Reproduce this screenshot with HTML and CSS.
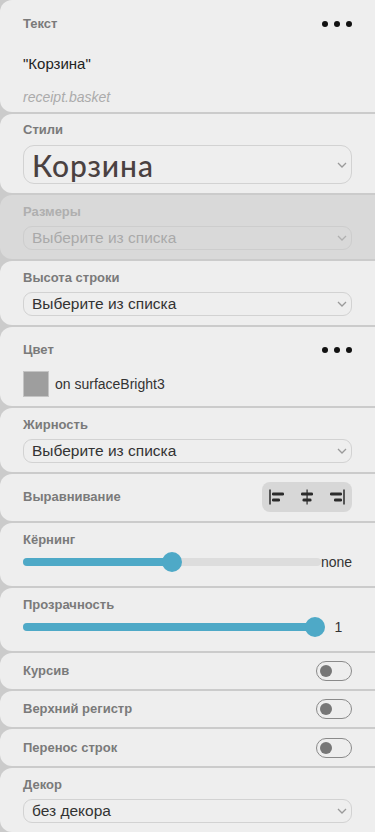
FILE: index.html
```html
<!DOCTYPE html>
<html lang="ru">
<head>
<meta charset="utf-8">
<title>Текст</title>
<link rel="stylesheet" href="styles.css">
</head>
<body>
<div class="panel">
  <section class="sec sec-text">
    <div class="head"><span class="label">Текст</span><span class="dots"><i></i><i></i><i></i></span></div>
    <div class="value">"Корзина"</div>
    <div class="key">receipt.basket</div>
  </section>

  <section class="sec sec-style">
    <span class="label">Стили</span>
    <div class="select select-big"><span class="style-name">Корзина</span><svg class="chev" viewBox="0 0 10 6" width="10" height="6"><path d="M1 1 L5 5 L9 1" fill="none" stroke="#9a9a9a" stroke-width="1.3"/></svg></div>
  </section>

  <section class="sec sec-field disabled">
    <span class="label">Размеры</span>
    <div class="select"><span>Выберите из списка</span><svg class="chev" viewBox="0 0 10 6" width="10" height="6"><path d="M1 1 L5 5 L9 1" fill="none" stroke="#b0b0b0" stroke-width="1.3"/></svg></div>
  </section>

  <section class="sec sec-field">
    <span class="label">Высота строки</span>
    <div class="select"><span>Выберите из списка</span><svg class="chev" viewBox="0 0 10 6" width="10" height="6"><path d="M1 1 L5 5 L9 1" fill="none" stroke="#9a9a9a" stroke-width="1.3"/></svg></div>
  </section>

  <section class="sec sec-color">
    <div class="head"><span class="label">Цвет</span><span class="dots"><i></i><i></i><i></i></span></div>
    <div class="color-row"><span class="swatch"></span><span class="color-name">on surfaceBright3</span></div>
  </section>

  <section class="sec sec-field">
    <span class="label">Жирность</span>
    <div class="select"><span>Выберите из списка</span><svg class="chev" viewBox="0 0 10 6" width="10" height="6"><path d="M1 1 L5 5 L9 1" fill="none" stroke="#9a9a9a" stroke-width="1.3"/></svg></div>
  </section>

  <section class="sec sec-align">
    <span class="label">Выравнивание</span>
    <div class="align-group">
      <svg viewBox="0 0 16 16" width="16" height="16"><rect x="0" y="0.5" width="2" height="15" fill="#555"/><rect x="3" y="3.5" width="12" height="3" rx="1.3" fill="#2b2b2b"/><rect x="3" y="9.5" width="8" height="3" rx="1.3" fill="#2b2b2b"/></svg>
      <svg viewBox="0 0 16 16" width="16" height="16"><rect x="7.3" y="0.5" width="1.6" height="15" fill="#555"/><rect x="2" y="3.5" width="12" height="3" rx="1.3" fill="#2b2b2b"/><rect x="3.5" y="9.5" width="9" height="3" rx="1.3" fill="#2b2b2b"/></svg>
      <svg viewBox="0 0 16 16" width="16" height="16"><rect x="14" y="0.5" width="2" height="15" fill="#555"/><rect x="1" y="3.5" width="12" height="3" rx="1.3" fill="#2b2b2b"/><rect x="5" y="9.5" width="8" height="3" rx="1.3" fill="#2b2b2b"/></svg>
    </div>
  </section>

  <section class="sec sec-slider">
    <span class="label">Кёрнинг</span>
    <div class="slider-row">
      <div class="track"><div class="fill" style="width:calc(10px + (100% - 20px) * 0.5)"></div><span class="thumb" style="left:calc(10px + (100% - 20px) * 0.5)"></span></div>
      <span class="slider-value value-wide">none</span>
    </div>
  </section>

  <section class="sec sec-slider">
    <span class="label">Прозрачность</span>
    <div class="slider-row">
      <div class="track"><div class="fill" style="width:calc(10px + (100% - 20px) * 1)"></div><span class="thumb" style="left:calc(10px + (100% - 20px) * 1)"></span></div>
      <span class="slider-value">1</span>
    </div>
  </section>

  <section class="sec sec-toggle">
    <span class="label">Курсив</span>
    <span class="toggle"><span class="knob"></span></span>
  </section>

  <section class="sec sec-toggle">
    <span class="label">Верхний регистр</span>
    <span class="toggle"><span class="knob"></span></span>
  </section>

  <section class="sec sec-toggle tall">
    <span class="label">Перенос строк</span>
    <span class="toggle"><span class="knob"></span></span>
  </section>

  <section class="sec sec-field last">
    <span class="label">Декор</span>
    <div class="select"><span>без декора</span><svg class="chev" viewBox="0 0 10 6" width="10" height="6"><path d="M1 1 L5 5 L9 1" fill="none" stroke="#9a9a9a" stroke-width="1.3"/></svg></div>
  </section>
</div>
</body>
</html>
```

FILE: styles.css
```css
* { box-sizing: border-box; }

html, body {
  margin: 0;
  padding: 0;
}

body {
  font-family: "Liberation Sans", Arial, sans-serif;
  background: #cbcbcb;
  color: #333;
}

.panel {
  width: 375px;
  height: 832px;
  overflow: hidden;
  display: flex;
  flex-direction: column;
  gap: 2px;
  background: #cbcbcb;
}

.sec {
  flex: none;
  background: #eeeeee;
  border-radius: 12px 0 0 12px;
  padding: 9px 23px 9px 23px;
  display: flex;
  flex-direction: column;
}

.label {
  font-size: 13px;
  line-height: 16px;
  font-weight: bold;
  color: #7a7a7a;
}

.head {
  height: 24px;
  display: flex;
  align-items: center;
  justify-content: space-between;
}

.dots {
  display: flex;
  gap: 6px;
  margin-top: -1px;
}

.dots i {
  display: block;
  width: 6px;
  height: 6px;
  border-radius: 50%;
  background: #111;
}

/* Текст */
.sec-text {
  height: 112px;
  padding-top: 12px;
  padding-bottom: 7px;
}

.value {
  margin-top: 18px;
  font-size: 15px;
  line-height: 20px;
  color: #222;
}

.key {
  margin-top: 15px;
  font-size: 14px;
  line-height: 16px;
  font-style: italic;
  color: #ababab;
}

/* selects */
.select {
  height: 24px;
  margin-top: 6px;
  border: 1px solid #d2d2d2;
  border-radius: 9px;
  padding: 0 4px 0 8px;
  display: flex;
  align-items: center;
  justify-content: space-between;
  font-size: 15.5px;
  color: #333;
}

.chev {
  flex: none;
}

.sec-field {
  height: 64px;
}

.sec-style {
  height: 79px;
  padding-top: 8px;
}

.select-big {
  height: 39px;
  margin-top: 7px;
  border-radius: 11px;
}

.style-name {
  font-family: Lato, "Open Sans", sans-serif;
  font-size: 30px;
  font-weight: 500;
  letter-spacing: 0.9px;
  color: #4a4141;
  line-height: 34px;
}

.disabled {
  background: #d9d9d9;
}

.disabled .label {
  color: #afafaf;
}

.disabled .select {
  border-color: #cdcdcd;
  color: #a9a9a9;
}

/* Цвет */
.sec-color {
  height: 79px;
  padding-top: 11px;
}

.color-row {
  margin-top: 9px;
  display: flex;
  align-items: center;
  gap: 6px;
}

.swatch {
  width: 26px;
  height: 26px;
  background: #9e9e9e;
  border: 1px solid #c4c4c4;
}

.color-name {
  font-size: 14px;
  color: #333;
}

/* Выравнивание */
.sec-align {
  height: 47px;
  padding-top: 8px;
  padding-bottom: 9px;
  flex-direction: row;
  align-items: center;
  justify-content: space-between;
}

.align-group {
  width: 90px;
  height: 30px;
  border-radius: 8px;
  background: #d7d7d7;
  display: flex;
  align-items: center;
  gap: 14px;
  padding: 0 7px;
}

/* sliders */
.sec-slider {
  height: 63px;
}

.slider-row {
  margin-top: 4px;
  height: 20px;
  display: flex;
  align-items: center;
}

.track {
  flex: 1;
  height: 8px;
  border-radius: 4px;
  background: #dddddd;
  position: relative;
}

.fill {
  height: 8px;
  border-radius: 4px;
  background: #4ea9c7;
}

.thumb {
  position: absolute;
  top: -6px;
  width: 20px;
  height: 20px;
  margin-left: -10px;
  border-radius: 50%;
  background: #4ea9c7;
}

.slider-value {
  flex: none;
  width: 27px;
  text-align: center;
  font-size: 14px;
  color: #333;
}

.value-wide {
  width: 31px;
  text-align: right;
}

/* toggles */
.sec-toggle {
  height: 36px;
  padding-top: 0;
  padding-bottom: 0;
  flex-direction: row;
  align-items: center;
  justify-content: space-between;
}

.sec-toggle.tall {
  height: 37px;
}

.toggle {
  width: 36px;
  height: 20px;
  border: 1.5px solid #8a8a8a;
  border-radius: 10px;
  display: flex;
  align-items: center;
  padding-left: 3px;
}

.knob {
  width: 12px;
  height: 12px;
  border-radius: 50%;
  background: #777;
}

.last {
  height: 64px;
}
```
